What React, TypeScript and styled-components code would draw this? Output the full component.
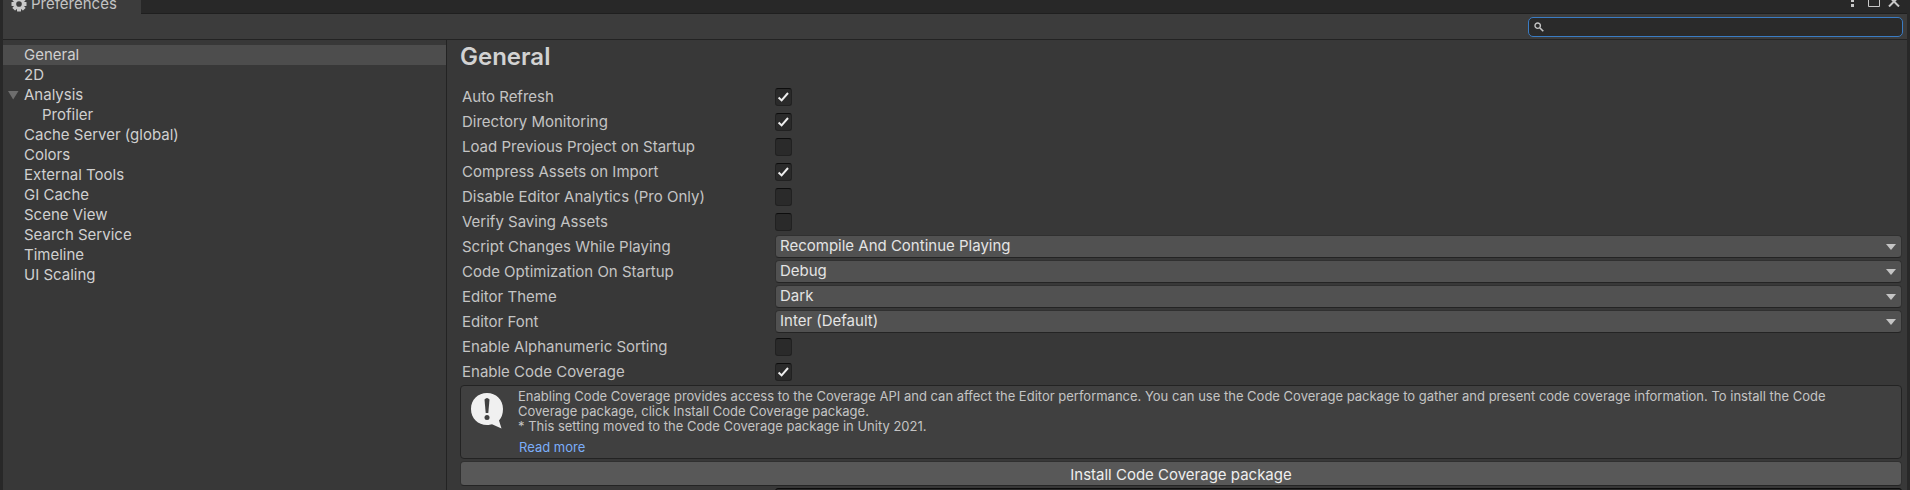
import React, { useState } from "react";
import styled, { createGlobalStyle } from "styled-components";

const GlobalStyle = createGlobalStyle`
  *, *::before, *::after { box-sizing: border-box; }
  html, body, #root { height: 100%; }
  body {
    margin: 0;
    overflow: hidden;
    background: #282828;
    color: #c4c4c4;
    font: 15px/20px Inter, "Liberation Sans", sans-serif;
  }
  button, input, select { font: inherit; color: inherit; margin: 0; }
`;

const Window = styled.div`
  height: 100%;
  display: flex;
  flex-direction: column;
  padding: 0 3px;
  overflow: hidden;
`;

const TitleBar = styled.header`
  flex: none;
  height: 14px;
  display: flex;
  justify-content: space-between;
  align-items: flex-end;
  box-shadow: inset 0 -1px #1f1f1f;
`;

const Tab = styled.div`
  height: 14px;
  width: 138px;
  padding-left: 8px;
  display: flex;
  align-items: flex-end;
  gap: 4px;
  background: #3c3c3c;
  line-height: 20px;
  svg { flex: none; margin-bottom: 2px; }
`;

const WindowButtons = styled.div`
  display: flex;
  align-items: flex-end;
  gap: 6px;
  padding: 0 6px 7px 0;
`;

const WindowButton = styled.button`
  display: flex;
  padding: 0;
  border: 0;
  background: none;
  svg { display: block; }
`;

const Toolbar = styled.div`
  flex: none;
  height: 26px;
  display: flex;
  justify-content: flex-end;
  align-items: center;
  padding: 1px 4px 0 0;
  background: #3c3c3c;
  border-bottom: 1px solid #232323;
`;

const SearchBox = styled.label`
  width: 375px;
  height: 20px;
  display: flex;
  align-items: center;
  gap: 4px;
  padding: 0 5px;
  border: 1px solid #3a7cc4;
  border-radius: 5px;
  background: #2a2a2a;
`;

const SearchInput = styled.input`
  flex: 1;
  min-width: 0;
  height: 16px;
  padding: 0;
  border: 0;
  outline: 0;
  background: none;
`;

const Body = styled.div`
  flex: 1;
  min-height: 0;
  display: flex;
  background: #383838;
`;

const Sidebar = styled.nav`
  flex: none;
  width: 444px;
  padding-top: 5px;
  border-right: 1px solid #232323;
`;

const TreeItem = styled.a<{ $level?: number; $selected?: boolean }>`
  height: 20px;
  display: flex;
  align-items: center;
  padding-left: ${(p) => (p.$level ? 22 : 4)}px;
  background: ${(p) => (p.$selected ? "#4d4d4d" : "transparent")};
  color: #d0d0d0;
  text-decoration: none;
`;

const Foldout = styled.span`
  width: 17px;
  display: flex;
  flex: none;
`;

const Settings = styled.main`
  flex: 1;
  min-width: 0;
  padding: 4px 5px 0 13px;
  overflow: hidden;
`;

const Heading = styled.h1`
  margin: 0 0 15px;
  font-size: 24px;
  line-height: 26px;
  font-weight: 600;
  color: #d2d2d2;
`;

const Row = styled.div`
  height: 23px;
  margin-bottom: 2px;
  display: flex;
  align-items: center;
`;

const RowLabel = styled.label`
  flex: none;
  width: 315px;
  padding-left: 2px;
`;

const CheckHolder = styled.span`
  display: grid;
  width: 17px;
  height: 18px;
  svg, input { grid-area: 1 / 1; place-self: center; }
  svg { pointer-events: none; z-index: 1; }
`;

const Checkbox = styled.input`
  appearance: none;
  width: 17px;
  height: 18px;
  border: 1px solid #212121;
  border-top-color: #0d0d0d;
  border-radius: 3px;
  background: #2a2a2a;
`;

const SelectHolder = styled.span`
  flex: 1;
  min-width: 0;
  display: grid;
  svg, select { grid-area: 1 / 1; }
  svg { place-self: center end; margin-right: 6px; pointer-events: none; z-index: 1; }
`;

const Select = styled.select`
  appearance: none;
  width: 100%;
  height: 23px;
  padding: 0 24px 2px 4px;
  border: 1px solid #303030;
  border-bottom-color: #242424;
  border-radius: 4px;
  background: #515151;
  color: #e4e4e4;
  line-height: 20px;
`;

const HelpBox = styled.section`
  display: flex;
  gap: 14px;
  min-height: 74px;
  padding: 3px 16px 0 9px;
  border: 1px solid #232323;
  border-radius: 4px;
  background: #404040;
  font-size: 13px;
  line-height: 15px;
  svg { flex: none; margin-top: 3px; }
`;

const HelpText = styled.p`
  margin: 0 0 6px;
  white-space: pre-line;
`;

const HelpLink = styled.a`
  padding-left: 1px;
  color: #7baefa;
  text-decoration: none;
`;

const InstallButton = styled.button`
  display: block;
  width: 100%;
  height: 25px;
  margin-top: 2px;
  padding: 2px 0 0;
  border: 1px solid #303030;
  border-bottom-color: #242424;
  border-radius: 4px;
  background: #585858;
  color: #eeeeee;
`;

const NextField = styled.div`
  margin: 2px 0 0 315px;
  height: 20px;
  border: 1px solid #0d0d0d;
  border-radius: 3px;
  background: #2a2a2a;
`;

type Page = { name: string; level?: number; open?: boolean };

const pages: Page[] = [
  { name: "General" },
  { name: "2D" },
  { name: "Analysis", open: true },
  { name: "Profiler", level: 1 },
  { name: "Cache Server (global)" },
  { name: "Colors" },
  { name: "External Tools" },
  { name: "GI Cache" },
  { name: "Scene View" },
  { name: "Search Service" },
  { name: "Timeline" },
  { name: "UI Scaling" },
];

type Setting = { label: string; value: boolean | string };

const settings: Setting[] = [
  { label: "Auto Refresh", value: true },
  { label: "Directory Monitoring", value: true },
  { label: "Load Previous Project on Startup", value: false },
  { label: "Compress Assets on Import", value: true },
  { label: "Disable Editor Analytics (Pro Only)", value: false },
  { label: "Verify Saving Assets", value: false },
  { label: "Script Changes While Playing", value: "Recompile And Continue Playing" },
  { label: "Code Optimization On Startup", value: "Debug" },
  { label: "Editor Theme", value: "Dark" },
  { label: "Editor Font", value: "Inter (Default)" },
  { label: "Enable Alphanumeric Sorting", value: false },
  { label: "Enable Code Coverage", value: true },
];

const Gear = () => (
  <svg width="16" height="16" viewBox="0 0 16 16" aria-hidden="true">
    <g fill="#c8c8c8">
      {[0, 45, 90, 135].map((a) => (
        <rect key={a} x="6" y="0.5" width="4" height="15" rx="0.5" transform={`rotate(${a} 8 8)`} />
      ))}
      <circle cx="8" cy="8" r="5.8" />
    </g>
    <circle cx="8" cy="8" r="2.8" fill="#3c3c3c" />
  </svg>
);

const Check = () => (
  <svg width="13" height="12" viewBox="0 0 13 12" aria-hidden="true">
    <path d="M1.6 6.6 4.6 9.4 11 2" fill="none" stroke="#eeeeee" strokeWidth="2" />
  </svg>
);

const ToggleField = ({ id, initial }: { id: string; initial: boolean }) => {
  const [on, setOn] = useState(initial);
  return (
    <CheckHolder>
      <Checkbox id={id} type="checkbox" checked={on} onChange={() => setOn(!on)} />
      {on && <Check />}
    </CheckHolder>
  );
};

const SelectField = ({ id, value }: { id: string; value: string }) => (
  <SelectHolder>
    <Select id={id} defaultValue={value}>
      <option>{value}</option>
    </Select>
    <svg width="10" height="6" viewBox="0 0 10 6" aria-hidden="true">
      <path d="M0 0H10L5 6Z" fill="#c4c4c4" />
    </svg>
  </SelectHolder>
);

export default function App() {
  return (
    <>
      <GlobalStyle />
      <Window>
        <TitleBar>
          <Tab>
            <Gear />
            Preferences
          </Tab>
          <WindowButtons>
            <WindowButton aria-label="Menu">
              <svg width="12" height="14" viewBox="0 0 12 14">
                <path d="M2 1h3v3H2zM2 6h3v3H2zM2 11h3v3H2z" fill="#c8c8c8" />
              </svg>
            </WindowButton>
            <WindowButton aria-label="Maximize">
              <svg width="14" height="14" viewBox="0 0 14 14">
                <path d="M1.5 2.5h11v11h-11z" fill="none" stroke="#c8c8c8" />
              </svg>
            </WindowButton>
            <WindowButton aria-label="Close">
              <svg width="14" height="14" viewBox="0 0 14 14">
                <path d="M2 3.500 12 13.500M12 3.500 2 13.500" stroke="#c8c8c8" strokeWidth="2" />
              </svg>
            </WindowButton>
          </WindowButtons>
        </TitleBar>
        <Toolbar>
          <SearchBox>
            <svg width="10" height="10" viewBox="0 0 10 10" aria-hidden="true">
              <circle cx="3.7" cy="3.7" r="2.7" fill="none" stroke="#c4c4c4" strokeWidth="1.4" />
              <path d="M5.7 5.7 9.3 9.3" stroke="#c4c4c4" strokeWidth="1.6" />
            </svg>
            <SearchInput type="text" aria-label="Search preferences" />
          </SearchBox>
        </Toolbar>
        <Body>
          <Sidebar>
            {pages.map((p, i) => (
              <TreeItem key={p.name} href="#" $level={p.level} $selected={i === 0}>
                <Foldout>
                  {p.open && (
                    <svg width="12" height="10" viewBox="0 0 12 10" aria-hidden="true">
                      <path d="M1 1H11.5L6.2 9.5Z" fill="#6e6e6e" />
                    </svg>
                  )}
                </Foldout>
                {p.name}
              </TreeItem>
            ))}
          </Sidebar>
          <Settings>
            <Heading>General</Heading>
            {settings.map((s, i) => (
              <Row key={s.label}>
                <RowLabel htmlFor={`setting-${i}`}>{s.label}</RowLabel>
                {typeof s.value === "boolean" ? (
                  <ToggleField id={`setting-${i}`} initial={s.value} />
                ) : (
                  <SelectField id={`setting-${i}`} value={s.value} />
                )}
              </Row>
            ))}
            <HelpBox>
              <svg width="34" height="38" viewBox="0 0 34 38" aria-hidden="true">
                <path
                  d="M17 1C26 1 33 7.500 33 17C33 22 31.500 26 29 28.500L31.500 36.500L22 32.300C20.500 32.800 19 33 17 33C8 33 1 26.500 1 17S8 1 17 1Z"
                  fill="#f0f0f0"
                />
                <path d="M14.500 7.500Q17 4.500 19.500 7.500L18.300 21H15.700Z" fill="#404040" />
                <circle cx="17" cy="25.500" r="2.500" fill="#404040" />
              </svg>
              <div>
                <HelpText>
                  {"Enabling Code Coverage provides access to the Coverage API and can affect the Editor performance. You can use the Code Coverage package to gather and present code coverage information. To install the Code Coverage package, click Install Code Coverage package.\n* This setting moved to the Code Coverage package in Unity 2021."}
                </HelpText>
                <HelpLink href="#">Read more</HelpLink>
              </div>
            </HelpBox>
            <InstallButton type="button">Install Code Coverage package</InstallButton>
            <NextField />
          </Settings>
        </Body>
      </Window>
    </>
  );
}
